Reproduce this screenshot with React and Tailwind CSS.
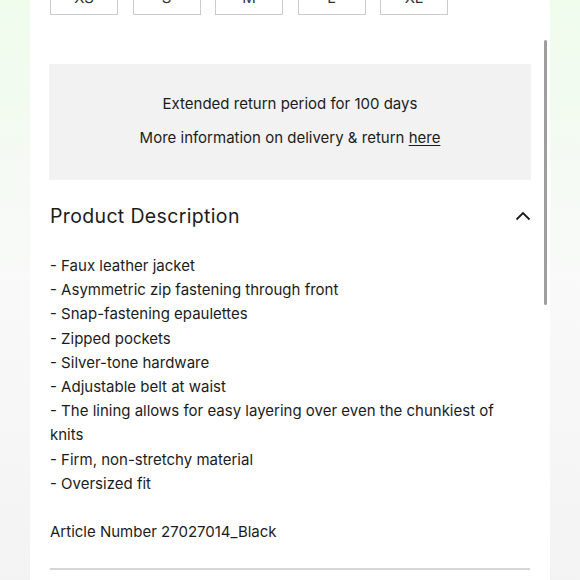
import React from "react";

const sizes = ["XS", "S", "M", "L", "XL"];
const items = [
  "- Faux leather jacket",
  "- Asymmetric zip fastening through front",
  "- Snap-fastening epaulettes",
  "- Zipped pockets",
  "- Silver-tone hardware",
  "- Adjustable belt at waist",
  "- The lining allows for easy layering over even the chunkiest of knits",
  "- Firm, non-stretchy material",
  "- Oversized fit",
];

export default function App() {
  return (
    <div
      className="w-[580px] h-[580px] overflow-hidden bg-gradient-to-b from-[#effcec] via-[#f9f9f9] to-[#f3f3f3] flex justify-center relative"
      style={{ fontFamily: "Inter, 'Noto Sans', sans-serif" }}
    >
      <div className="w-[520px] h-full bg-white px-[20px] text-[#1c1c1c] relative">
        <div className="flex gap-[14.5px] mt-[-19px]">
          {sizes.map((s) => (
            <div
              key={s}
              className="w-[68px] h-[34px] border border-[#cccccc] flex items-center justify-center text-[15px] text-[#333]"
            >
              {s}
            </div>
          ))}
        </div>
        <div className="mt-[49px] mx-[-1px] h-[116px] bg-[#f2f2f2] flex flex-col items-center justify-center gap-[12px] pb-[2px] text-[15px] leading-[22px]">
          <p>Extended return period for 100 days</p>
          <p>
            More information on delivery &amp; return <span className="underline underline-offset-2">here</span>
          </p>
        </div>
        <div className="flex items-center justify-between h-[72px]">
          <h2 className="text-[19.5px] tracking-[0.35px] pt-[2px]">Product Description</h2>
          <svg width="16" height="10" viewBox="0 0 16 10" className="mr-[-1px]">
            <path d="M1.5 8.5 L8 2 L14.5 8.5" fill="none" stroke="#1c1c1c" strokeWidth="1.8" />
          </svg>
        </div>
        <div className="mt-[2px] text-[15px] leading-[24.2px]">
          {items.map((t) => (
            <p key={t}>{t}</p>
          ))}
          <p className="mt-[24px]">Article Number 27027014_Black</p>
        </div>
        <div className="mt-[24px] h-[2px] bg-[#d6d6d6]" />
        <div className="absolute left-[514px] top-[40px] w-[3px] h-[265px] rounded-full bg-[#9e9e9e]" />
      </div>
    </div>
  );
}
